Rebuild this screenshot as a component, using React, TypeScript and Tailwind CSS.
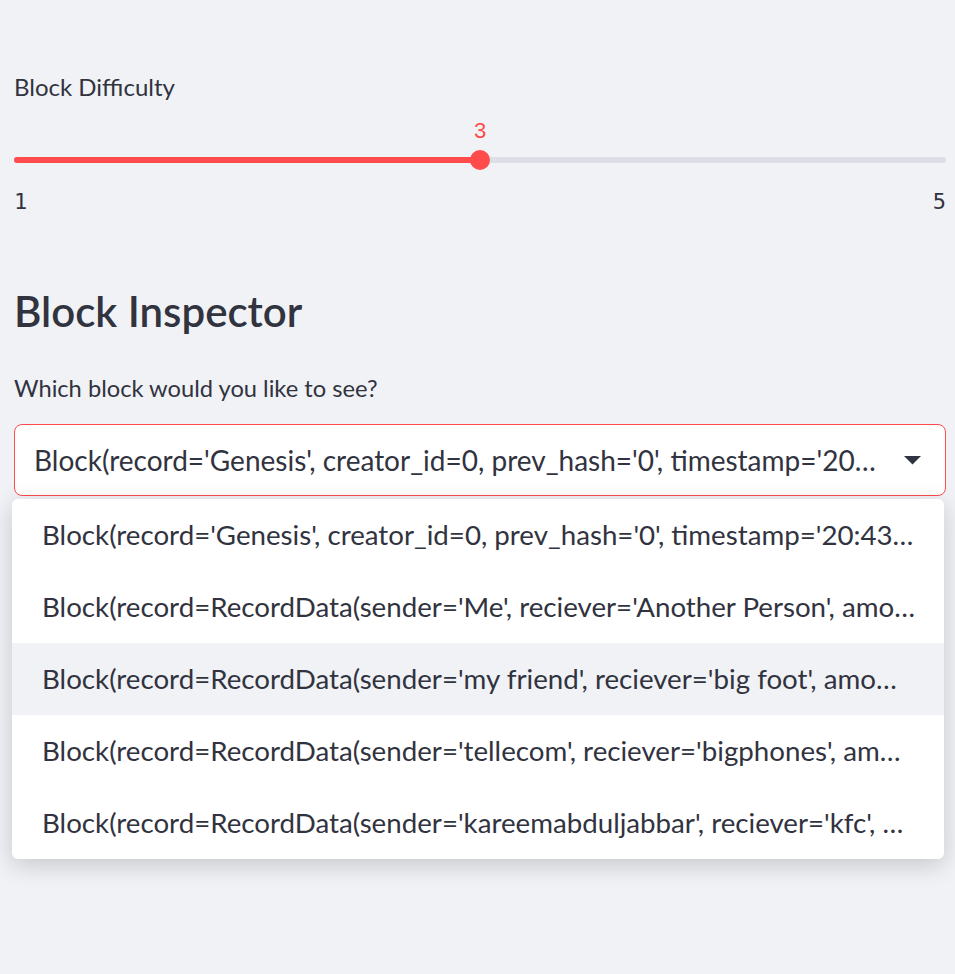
import React from "react";

const options = [
  "Block(record='Genesis', creator_id=0, prev_hash='0', timestamp='20:43…",
  "Block(record=RecordData(sender='Me', reciever='Another Person', amo…",
  "Block(record=RecordData(sender='my friend', reciever='big foot', amo…",
  "Block(record=RecordData(sender='tellecom', reciever='bigphones', am…",
  "Block(record=RecordData(sender='kareemabduljabbar', reciever='kfc', …",
];

export default function App() {
  const min = 1;
  const max = 5;
  const value = 3;
  const pct = ((value - min) / (max - min)) * 100;
  const hovered = 2;

  return (
    <div className="min-h-screen bg-[#f0f2f6] px-[14px] pt-[71px] text-[#31333f] font-['Lato','Noto_Sans',sans-serif] overflow-hidden">
      {/* Difficulty slider */}
      <div className="text-[24px] leading-[32px]">Block Difficulty</div>
      <div className="w-[932px]">
        <div className="relative mt-[16px] h-[28px]">
          <span
            className="absolute top-0 -translate-x-1/2 text-[22px] leading-[28px] text-[#ff4b4b] font-['Liberation_Mono','DejaVu_Sans_Mono',monospace]"
            style={{ left: `${pct}%` }}
          >
            {value}
          </span>
        </div>
        <div className="relative mt-[3px] h-[20px] flex items-center">
          <div className="h-[6px] w-full rounded-full bg-[#dcdfe7]">
            <div className="h-full rounded-full bg-[#ff4b4b]" style={{ width: `${pct}%` }} />
          </div>
          <div
            className="absolute top-0 h-[20px] w-[20px] -translate-x-1/2 rounded-full bg-[#ff4b4b]"
            style={{ left: `${pct}%` }}
          />
        </div>
        <div className="mt-[18px] flex justify-between text-[22px] leading-[28px] font-['DejaVu_Sans_Mono',monospace]">
          <span>{min}</span>
          <span>{max}</span>
        </div>
      </div>

      {/* Block inspector */}
      <h3 className="mt-[67px] text-[42px] leading-[56px] font-semibold">Block Inspector</h3>
      <div className="mt-[33px] text-[23.7px] leading-[32px]">Which block would you like to see?</div>

      <div className="relative mt-[20px] w-[932px]">
        <div className="flex h-[72px] items-center rounded-[8px] border border-[#ff4b4b] bg-white pl-[19px] pr-[24px]">
          <span className="flex-1 truncate text-[28px]">{options[0].replace("20:43…", "20…")}</span>
          <svg width="17" height="9" viewBox="0 0 17 9" className="ml-[16px] shrink-0">
            <path d="M0 0 L17 0 L8.5 8.5 Z" fill="#31333f" />
          </svg>
        </div>

        <ul className="absolute left-[-2px] top-[75px] w-[932px] overflow-hidden rounded-[6px] bg-white shadow-[0_6px_24px_rgba(0,0,0,0.18)]">
          {options.map((o, i) => (
            <li
              key={i}
              className={`flex h-[72px] items-center pl-[30px] pr-[12px] text-[27.7px] ${
                i === hovered ? "bg-[#f0f2f6]" : ""
              }`}
            >
              <span className="truncate">{o}</span>
            </li>
          ))}
        </ul>
      </div>
      <div className="h-[400px]" />
    </div>
  );
}
